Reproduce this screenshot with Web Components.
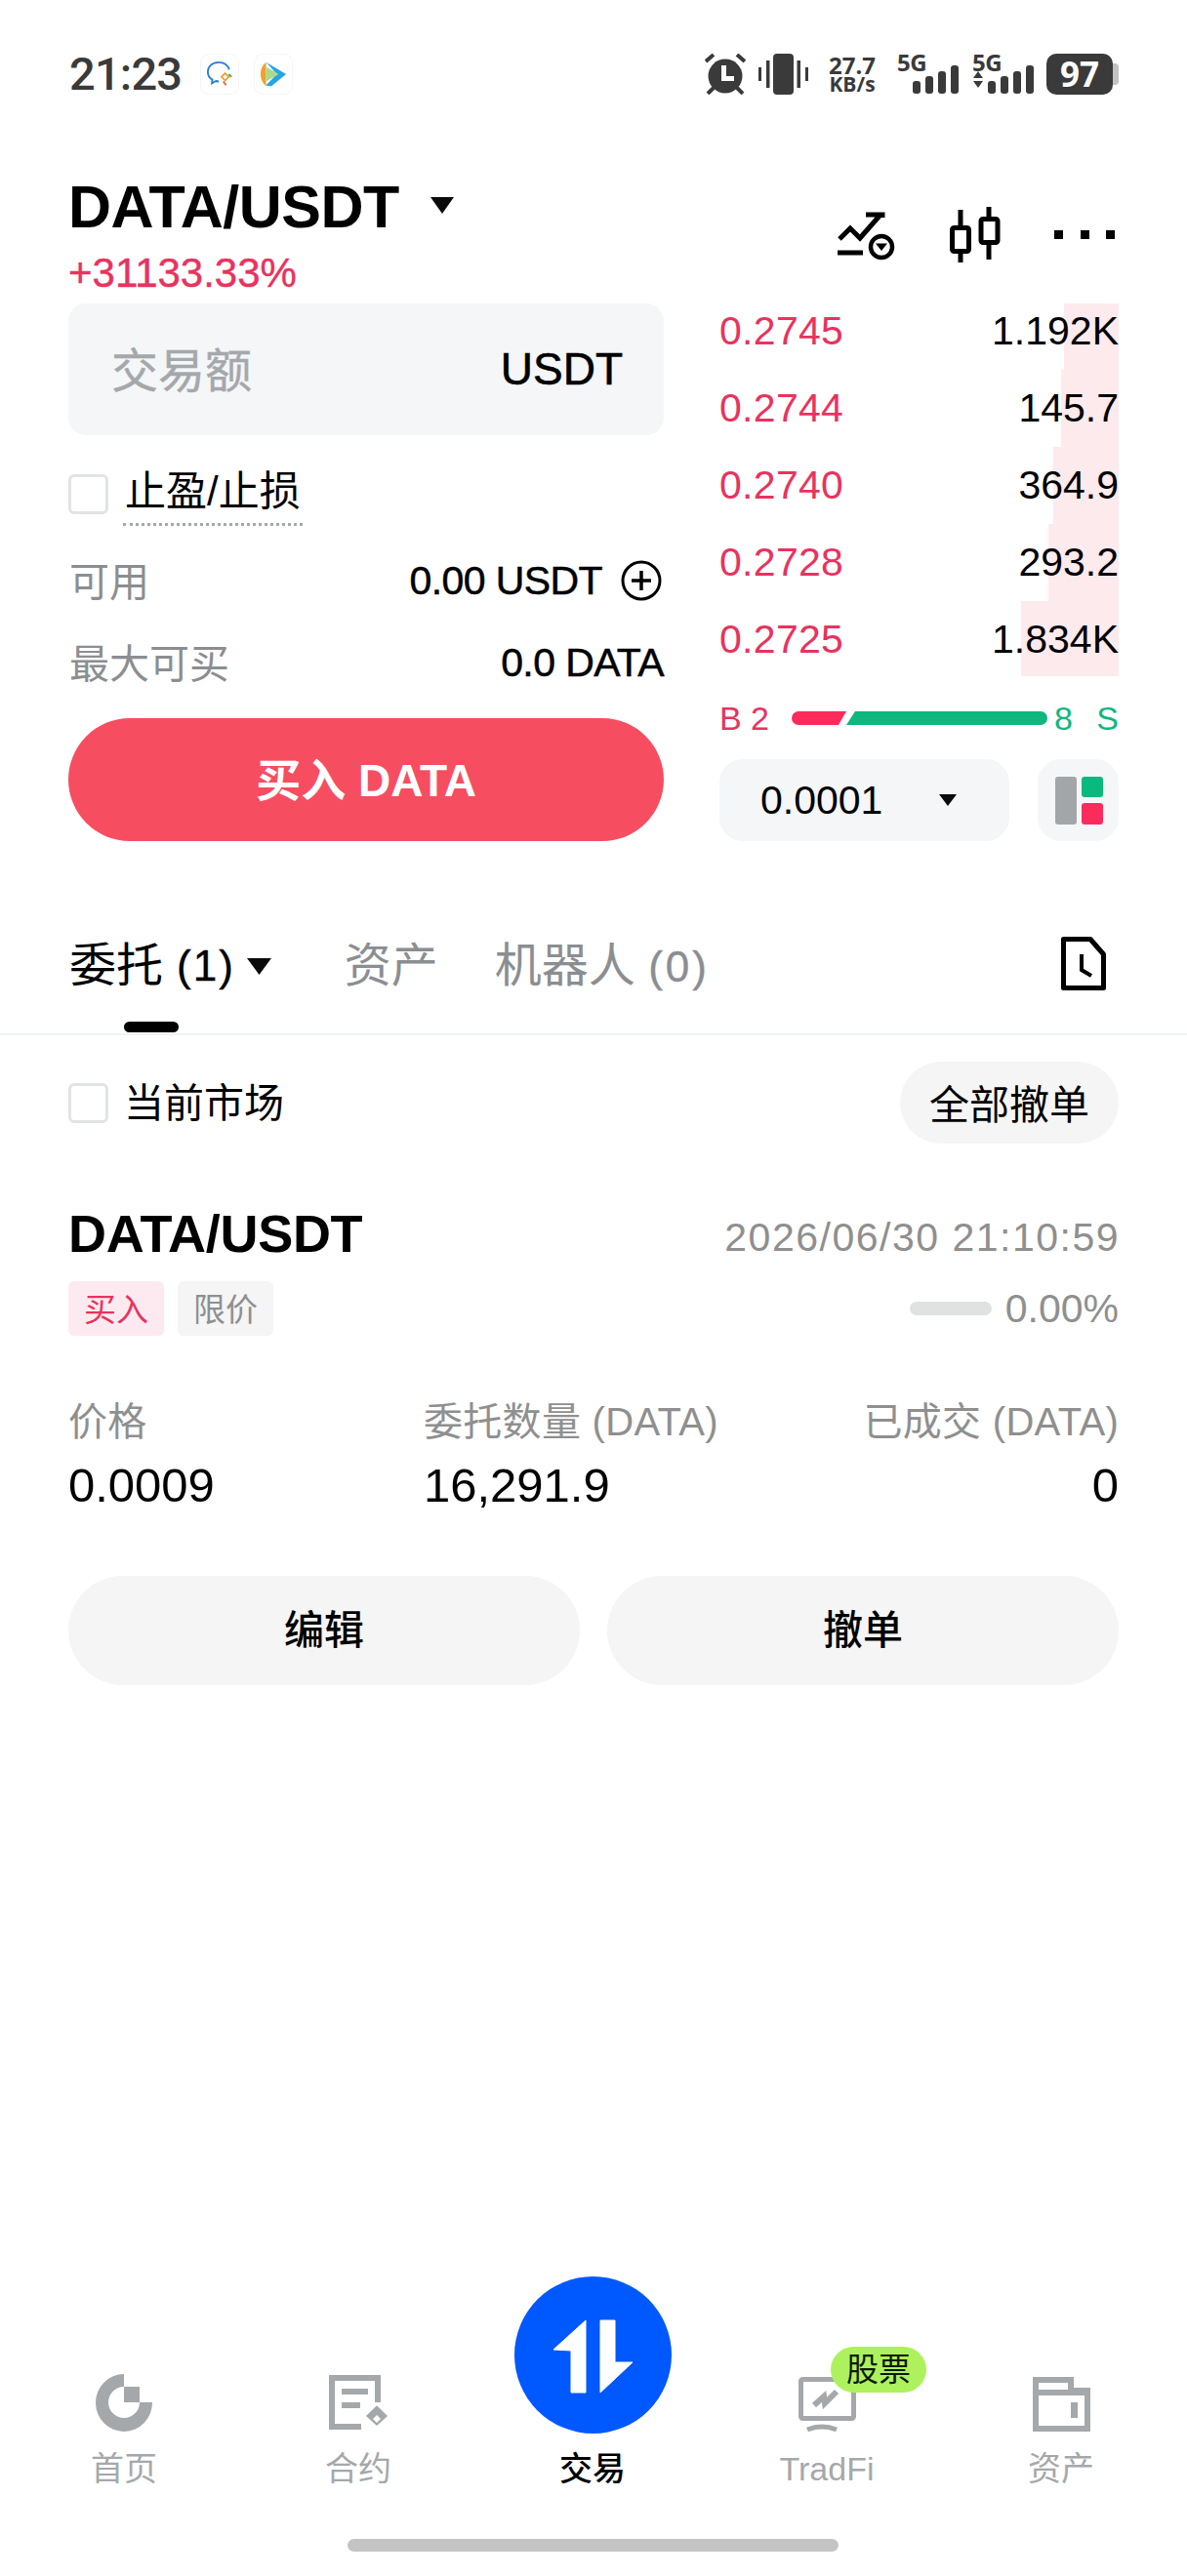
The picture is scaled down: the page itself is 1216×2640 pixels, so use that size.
<!DOCTYPE html>
<html lang="zh">
<head>
<meta charset="utf-8">
<title>DATA/USDT</title>
<style>
html, body { margin: 0; padding: 0; background: #fff; }
body {
    width: 1216px;
    height: 2640px;
    display: flex;
    flex-direction: column;
    overflow: hidden;
    color: #000;
    font-family: "Liberation Sans", "Noto Sans CJK SC", sans-serif;
}
</style>
</head>
<body>
<status-bar></status-bar>
<pair-header></pair-header>
<trade-panel>
    <order-form slot="form"></order-form>
    <order-book slot="book">
        <book-row price="0.2745" size="1.192K" depth="56"></book-row>
        <book-row price="0.2744" size="145.7" depth="59"></book-row>
        <book-row price="0.2740" size="364.9" depth="67"></book-row>
        <book-row price="0.2728" size="293.2" depth="72"></book-row>
        <book-row price="0.2725" size="1.834K" depth="100"></book-row>
    </order-book>
</trade-panel>
<orders-tabs></orders-tabs>
<orders-filter></orders-filter>
<order-card></order-card>
<bottom-nav>
    <nav-item>
        <svg slot="icon" width="58" height="60" viewBox="0 0 58 60" fill="#a5a8ab"><path d="M29 1A29 29.5 0 1 0 58 30H45A16 16 0 1 1 29 14Z"/><rect x="29" y="14" width="16" height="16"/></svg>
        首页
    </nav-item>
    <nav-item>
        <svg slot="icon" width="60" height="58" viewBox="0 0 60 58" fill="none" stroke="#a5a8ab" stroke-width="6"><path d="M50 28V3H3V53H33"/><path d="M13 17H40M13 31H32"/><path d="M49 37L60 49L49 60L38 49Z" transform="translate(0 -2) scale(1 .9)" fill="#a5a8ab" stroke="none"/><path d="M49 41L53 45L49 49L45 45Z" fill="#fff" stroke="none"/></svg>
        合约
    </nav-item>
    <nav-item active>
        <svg slot="icon" width="161" height="161" viewBox="0 0 161 161"><circle cx="80.5" cy="80.5" r="80.5" fill="#0058ff"/><path d="M73 45L40 75L58 76V119H73Z M88 45H103V88H121L88 119Z" fill="#fff" stroke="#fff" stroke-width="1" stroke-linejoin="round"/></svg>
        交易
    </nav-item>
    <nav-item>
        <svg slot="icon" width="59" height="56" viewBox="0 0 59 56" fill="none" stroke="#a5a8ab" stroke-width="5"><rect x="2.5" y="2.5" width="54" height="40" rx="2"/><path d="M9 54Q24 48 39 54"/><path d="M16 29L26 20L27 27L39 15" stroke-width="6"/></svg>
        <span slot="badge">股票</span>
        TradFi
    </nav-item>
    <nav-item>
        <svg slot="icon" width="59" height="56" viewBox="0 0 59 56" fill="none" stroke="#a5a8ab" stroke-width="6"><path d="M3 3H39V14H56V53H3Z"/><path d="M3 16H56"/><rect x="39" y="26" width="7" height="16" fill="#a5a8ab" stroke="none"/></svg>
        资产
    </nav-item>
</bottom-nav>

<script>
const FONT = '"Liberation Sans", "Noto Sans CJK SC", sans-serif';

function makeTemplate(html) {
    const t = document.createElement('template');
    t.innerHTML = html;
    return t;
}

// every element here is only a template in an open shadow root
function defineSimple(name, template) {
    customElements.define(name, class extends HTMLElement {
        constructor() {
            super();
            this.attachShadow({mode: 'open'});
            this.shadowRoot.appendChild(template.content.cloneNode(true));
        }
    });
}

const signalBars = `
<rect x="0" y="16" width="8" height="13" rx="3"/>
<rect x="13" y="11" width="8" height="18" rx="3"/>
<rect x="26" y="6" width="8" height="23" rx="3"/>
<rect x="39" y="0" width="8" height="29" rx="3"/>`;

defineSimple('status-bar', makeTemplate(`
<style>
:host { display: flex; align-items: center; height: 42px; padding: 55px 70px 0 71px; color: #3a3a3a; }
.time { font: 500 47px/42px Roboto, sans-serif; width: 116px; letter-spacing: -.8px; }
.app { width: 40px; height: 42px; box-sizing: border-box; border: 1px solid #f5f5f5; border-radius: 9px; display: flex; align-items: center; justify-content: center; margin-left: 18px; }
.app + .app { margin-left: 15px; }
.right { margin-left: auto; display: flex; align-items: center; height: 42px; }
svg { display: block; }
.speed { width: 50px; margin: 0 21px 0 20px; text-align: center; }
.speed span { display: block; font: 700 24px/21px "Open Sans", sans-serif; height: 21px; }
.speed small { display: block; font: 700 21px/19px "Open Sans", sans-serif; height: 19px; white-space: nowrap; }
.sig { position: relative; height: 42px; }
.sig b { position: absolute; left: 0; top: -2px; font: 700 24px/22px "Open Sans", sans-serif; letter-spacing: -.5px; }
.sig svg { position: absolute; right: 0; bottom: 1px; }
.bat { display: flex; align-items: center; margin-left: 12px; }
.bat span { width: 68px; height: 42px; border-radius: 10px; background: #3a3a3a; color: #fff; font: 700 35px/42px "Open Sans", sans-serif; text-align: center; }
.bat i { width: 6px; height: 22px; background: #c2c2c2; border-radius: 0 4px 4px 0; }
</style>
<span class="time">21:23</span>
<span class="app"><svg width="30" height="28" viewBox="0 0 30 30" fill="none"><path d="M14 2C7 2 2 6.500 2 12.500C2 16.500 4.500 19.500 7 21L6.500 25L11 22.500C12 22.800 13 23 14 23" stroke="#2a7fd0" stroke-width="2"/><path d="M14 2C20 2 24 5.500 25.500 10" stroke="#2a7fd0" stroke-width="2"/><path d="M21 14L25 18L21 22L17 18Z" stroke="#f0a040" stroke-width="2"/><path d="M25 15L28 18" stroke="#4cae50" stroke-width="2"/><path d="M19 23L22 27" stroke="#e2603a" stroke-width="2"/></svg></span>
<span class="app"><svg width="28" height="28" viewBox="0 0 30 30"><path d="M7 2C3 5 1 10 1 15S3 25 7 28Z" fill="#f0a030"/><path d="M7 2L29 15L13 28C10 28 8 28 7 27L19 15Z" fill="#27a4e4"/><path d="M7 7L21 15L7 23Z" fill="#a8dc8a"/></svg></span>
<div class="right">
    <svg width="42" height="42" viewBox="0 0 42 42" fill="#3a3a3a"><circle cx="21" cy="23" r="17.500"/><path d="M1 8L9 1M41 8L33 1M9 35L3 41M33 35L39 41" stroke="#3a3a3a" stroke-width="4"/><path d="M19.500 12V25.500H30" fill="none" stroke="#fff" stroke-width="5"/></svg>
    <svg style="margin-left:13px" width="51" height="42" viewBox="0 0 51 42" fill="#3a3a3a"><rect x="15" y="0" width="21" height="42" rx="4"/><rect x="0" y="14" width="3" height="14"/><rect x="8" y="7" width="3.500" height="28"/><rect x="39.500" y="7" width="3.500" height="28"/><rect x="48" y="14" width="3" height="14"/></svg>
    <div class="speed"><span>27.7</span><small>KB/s</small></div>
    <div class="sig" style="width:63px"><b>5G</b><svg width="47" height="29" viewBox="0 0 47 29" fill="#3a3a3a">${signalBars}</svg></div>
    <div class="sig" style="width:64px;margin-left:14px"><b>5G</b><svg width="64" height="29" viewBox="0 0 64 29" fill="#3a3a3a"><g transform="translate(16 0)">${signalBars}</g><path d="M1 13L6 6L11 13ZM1 16H11L6 23Z"/></svg></div>
    <div class="bat"><span>97</span><i></i></div>
</div>
`));

defineSimple('pair-header', makeTemplate(`
<style>
:host { display: flex; justify-content: space-between; height: 131px; padding: 83px 70px 0; }
h1 { margin: 0; font: 700 61px/60px ${FONT}; letter-spacing: -.5px; display: flex; align-items: center; height: 64px; }
h1 svg { margin-left: 32px; margin-top: -4px; }
.pct { margin-top: 16px; font: 42px/40px ${FONT}; color: #e8335f; -webkit-text-stroke: .4px #e8335f; }
.tools { display: flex; padding-top: 32px; height: 58px; padding-right: 4px; }
svg { display: block; }
</style>
<div>
    <h1>DATA/USDT<svg width="24" height="17" viewBox="0 0 24 17"><path d="M0 0H24L12 17Z" fill="#0a0a0a"/></svg></h1>
    <div class="pct">+31133.33%</div>
</div>
<div class="tools">
    <svg style="margin-top:5px" width="59" height="50" viewBox="0 0 59 50" fill="none" stroke="#000" stroke-width="5"><path d="M2 28L13 17L23 27L44 3M29 3H46V6"/><path d="M0 42H26"/><circle cx="45" cy="36" r="11" stroke-width="4.500"/><path d="M39 32.500H51L45 40Z" fill="#000" stroke="none"/></svg>
    <svg style="margin-left:56px" width="52" height="58" viewBox="0 0 52 58" fill="none" stroke="#000" stroke-width="5"><path d="M11 3V57M40 0V54"/><rect x="2.500" y="21.500" width="17" height="24" rx="2" fill="#fff"/><rect x="32" y="12.500" width="17" height="24" rx="2" fill="#fff"/></svg>
    <svg style="margin-left:55px;margin-top:24px" width="62" height="9" viewBox="0 0 62 9"><rect width="9" height="9"/><rect x="27" width="9" height="9"/><rect x="53" width="9" height="9"/></svg>
</div>
`));

defineSimple('trade-panel', makeTemplate(`
<style>
:host { display: grid; grid-template-columns: 610px 409px; column-gap: 57px; padding: 0 70px; height: 551px; }
</style>
<slot name="form"></slot>
<slot name="book"></slot>
`));

defineSimple('check-box', makeTemplate(`
<style>
:host { display: block; width: 41px; height: 41px; box-sizing: border-box; border: 3px solid #e1e3e5; border-radius: 6px; background: #fff; flex: none; }
</style>
`));

defineSimple('order-form', makeTemplate(`
<style>
:host { display: block; font-size: 41px; }
.input { height: 135px; background: #f4f6f8; border-radius: 18px; display: flex; align-items: center; justify-content: space-between; padding: 0 42px 0 44px; }
.input span { font-size: 48px; color: #a5a8ab; -webkit-text-stroke: .4px #a5a8ab; padding-bottom: 6px; }
.input b { font: 46px ${FONT}; -webkit-text-stroke: .6px #000; padding-bottom: 2px; }
.tp { display: flex; height: 67px; margin-top: 40px; }
.tp span { margin-left: 15px; height: 40px; line-height: 40px; padding: 0 2px 12px; margin-top: -2px; font-size: 42px; border-bottom: 3px dotted #a5a8ab; letter-spacing: 0; }
.row { display: flex; justify-content: space-between; align-items: center; height: 84px; padding-left: 1px; }
.row span { color: #8b8e91; font-size: 41px; padding-bottom: 4px; }
.row b { font: 41px ${FONT}; -webkit-text-stroke: .5px #000; display: flex; align-items: center; letter-spacing: -.6px; }
.row svg { margin-left: 19px; margin-right: 2px; }
.buy { margin-top: 15px; height: 126px; border-radius: 63px; background: #f74d61; color: #fff; display: flex; align-items: center; justify-content: center; font: 700 46px ${FONT}; }
.buy span { padding-bottom: 6px; }
</style>
<div class="input"><span>交易额</span><b>USDT</b></div>
<div class="tp"><check-box></check-box><span>止盈/止损</span></div>
<div class="row"><span>可用</span><b>0.00 USDT<svg width="42" height="42" viewBox="0 0 42 42" fill="none" stroke="#000"><circle cx="21" cy="21" r="19" stroke-width="3"/><path d="M21 11V31M11 21H31" stroke-width="3.500"/></svg></b></div>
<div class="row"><span>最大可买</span><b>0.0 DATA</b></div>
<div class="buy"><span>买入 DATA</span></div>
`));

defineSimple('order-book', makeTemplate(`
<style>
:host { display: block; }
.rows { height: 382px; overflow: hidden; }
.rows ::slotted(book-row:first-child) { margin-top: -11px; }
.ratio { display: flex; align-items: center; height: 28px; margin-top: 29px; font-size: 34px; line-height: 28px; }
.b { color: #e8335f; width: 74px; white-space: pre; }
.s { color: #0fb77e; }
.ratio svg { display: block; }
.tools { display: flex; justify-content: space-between; margin-top: 28px; }
.tick { width: 297px; height: 84px; border-radius: 24px; background: #f4f6f8; display: flex; align-items: center; box-sizing: border-box; padding-left: 42px; font-size: 41px; }
.tick svg { margin-left: 58px; }
.layout { width: 83px; height: 84px; border-radius: 24px; background: #f4f6f8; display: flex; align-items: center; justify-content: center; }
.layout svg { margin-left: 2px; }
</style>
<div class="rows"><slot></slot></div>
<div class="ratio">
    <span class="b">B 2</span>
    <svg width="262" height="14" viewBox="0 0 262 14"><path d="M7 0H56L48 14H7A7 7 0 0 1 7 0Z" fill="#fb2c5c"/><path d="M65 0H255A7 7 0 0 1 255 14H56Z" fill="#0fb77e"/></svg>
    <span class="s" style="margin-left:7px">8</span>
    <span class="s" style="margin-left:auto">S</span>
</div>
<div class="tools">
    <div class="tick">0.0001<svg width="18" height="12" viewBox="0 0 18 12"><path d="M0 0H18L9 12Z" fill="#0a0a0a"/></svg></div>
    <div class="layout"><svg width="49" height="49" viewBox="0 0 49 49"><rect width="22" height="49" rx="3" fill="#a3a6a9"/><rect x="27" width="22" height="21" rx="3" fill="#0cb97c"/><rect x="27" y="27" width="22" height="22" rx="3" fill="#fb2c5c"/></svg></div>
</div>
`));

const templateBookRow = makeTemplate(`
<style>
:host { display: flex; justify-content: space-between; align-items: center; height: 79px; position: relative; font-size: 41px; }
.price { color: #e8335f; position: relative; letter-spacing: .3px; }
.size { position: relative; }
.depth { position: absolute; right: 0; top: 0; bottom: 0; background: #fdeaed; }
</style>
<div class="depth"></div>
<span class="price"></span>
<span class="size"></span>
`);

class BookRow extends HTMLElement {
    constructor() {
        super();
        this.attachShadow({mode: 'open'});
        this.shadowRoot.appendChild(templateBookRow.content.cloneNode(true));
    }

    connectedCallback() {
        this.shadowRoot.querySelector('.price').textContent = this.getAttribute('price');
        this.shadowRoot.querySelector('.size').textContent = this.getAttribute('size');
        // depth is a share of the widest bar, which is 100px
        this.shadowRoot.querySelector('.depth').style.width = this.getAttribute('depth') + 'px';
    }
}
customElements.define('book-row', BookRow);

defineSimple('orders-tabs', makeTemplate(`
<style>
:host { display: flex; align-items: flex-start; height: 94px; padding: 103px 70px 0 71px; margin-bottom: -1px; border-bottom: 2px solid #f0f1f2; font-size: 48px; line-height: 50px; position: relative; }
.tab { color: #8b8e91; margin-right: 58px; white-space: nowrap; }
.tab small { font-size: 44px; letter-spacing: 3px; -webkit-text-stroke: .4px currentColor; }
.on { color: #000; position: relative; display: flex; align-items: center; margin-right: 75px; }
.on small { margin-left: 14px; letter-spacing: 2px; }
.on svg { margin-left: 12px; }
.on::after { content: ""; position: absolute; left: 56px; top: 82px; width: 56px; height: 11px; border-radius: 6px; background: #000; }
.his { margin-left: auto; margin-top: -5px; margin-right: 13px; display: block; }
</style>
<div class="tab on">委托<small>(1)</small><svg width="25" height="17" viewBox="0 0 25 17"><path d="M0 0H25L12.500 17Z" fill="#0a0a0a"/></svg></div>
<div class="tab">资产</div>
<div class="tab">机器人 <small>(0)</small></div>
<svg class="his" width="46" height="55" viewBox="0 0 46 55" fill="none" stroke="#000" stroke-width="5"><path d="M2.500 2.500H30L43.500 18V52.500H2.500Z" stroke-linejoin="round"/><path d="M21 18V34L31 40" stroke-width="4"/></svg>
`));

defineSimple('orders-filter', makeTemplate(`
<style>
:host { display: flex; align-items: center; justify-content: space-between; padding: 28px 70px 0; height: 84px; font-size: 41px; }
.l { display: flex; align-items: center; }
.l span { margin-left: 16px; padding-bottom: 6px; }
.all { width: 224px; height: 84px; padding-bottom: 2px; box-sizing: border-box; border-radius: 42px; background: #f5f5f5; display: flex; align-items: center; justify-content: center; }
</style>
<div class="l"><check-box></check-box><span>当前市场</span></div>
<div class="all">全部撤单</div>
`));

defineSimple('order-card', makeTemplate(`
<style>
:host { display: block; padding: 68px 70px 0; }
.top { display: flex; justify-content: space-between; align-items: flex-end; }
h2 { margin: 0; font: 700 54px/48px ${FONT}; letter-spacing: -.3px; }
.date { font-size: 41px; line-height: 40px; color: #8f8f8f; letter-spacing: 1.5px; margin-right: -1px; }
.tags { display: flex; align-items: center; height: 56px; margin-top: 25px; }
.tag { width: 98px; height: 56px; padding-bottom: 2px; box-sizing: border-box; border-radius: 6px; display: flex; align-items: center; justify-content: center; font-size: 33px; background: #f5f5f5; color: #8f8f8f; margin-right: 14px; }
.tag.buy { background: #fdeaf0; color: #e8335f; }
.bar { margin-left: auto; width: 84px; height: 14px; border-radius: 7px; background: #e0e2e2; }
.pct { margin-left: 14px; font-size: 41px; color: #8f8f8f; }
.grid { display: grid; grid-template-columns: 364px auto 1fr; margin-top: 69px; }
.grid span { color: #8f8f8f; font-size: 40px; line-height: 38px; white-space: nowrap; letter-spacing: .3px; }
.grid b { font: 49px/50px ${FONT}; margin-top: 21px; }
.grid .r { text-align: right; }
.acts { display: grid; grid-template-columns: 1fr 1fr; gap: 28px; margin-top: 68px; }
.acts div { height: 112px; padding-bottom: 8px; box-sizing: border-box; border-radius: 56px; background: #f5f5f5; display: flex; align-items: center; justify-content: center; font-size: 41px; font-weight: 500; }
</style>
<div class="top"><h2>DATA/USDT</h2><span class="date">2026/06/30 21:10:59</span></div>
<div class="tags"><div class="tag buy">买入</div><div class="tag">限价</div><div class="bar"></div><div class="pct">0.00%</div></div>
<div class="grid">
    <span>价格</span><span>委托数量 (DATA)</span><span class="r">已成交 (DATA)</span>
    <b>0.0009</b><b>16,291.9</b><b class="r">0</b>
</div>
<div class="acts"><div>编辑</div><div>撤单</div></div>
`));

defineSimple('bottom-nav', makeTemplate(`
<style>
:host { display: block; margin-top: auto; }
.items { display: flex; padding-left: 7px; }
.home { width: 503px; height: 13px; border-radius: 7px; background: #c4c4c4; margin: 52px 0 25px 356px; }
</style>
<div class="items"><slot></slot></div>
<div class="home"></div>
`));

defineSimple('nav-item', makeTemplate(`
<style>
:host { display: flex; flex-direction: column; align-items: center; width: 240px; position: relative; color: #a5a8ab; font-size: 34px; line-height: 40px; }
:host([active]) { color: #000; font-weight: 500; }
.icon { height: 161px; display: flex; align-items: flex-end; margin-bottom: 16px; }
::slotted(svg) { display: block; margin-bottom: 2px; }
:host([active]) ::slotted(svg) { margin-bottom: 0; }
.badge { position: absolute; left: 124px; top: 72px; }
::slotted(span) { display: flex; align-items: center; justify-content: center; width: 98px; height: 47px; border-radius: 24px; background: #adf25e; color: #0a1a00; font-size: 33px; }
</style>
<div class="icon"><slot name="icon"></slot></div>
<slot></slot>
<div class="badge"><slot name="badge"></slot></div>
`));
</script>
</body>
</html>
